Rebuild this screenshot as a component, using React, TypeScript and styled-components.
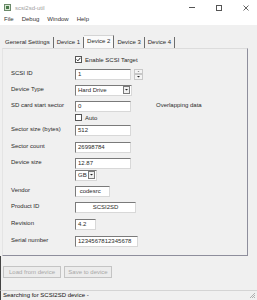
import React from "react";
import styled, { createGlobalStyle } from "styled-components";

const GlobalStyle = createGlobalStyle`
  html, body {
    margin: 0;
    padding: 0;
    background: #f0f0f0;
  }
  body {
    font-family: "Liberation Sans", "DejaVu Sans", sans-serif;
    font-size: 6px;
    color: #2a2a2a;
  }
`;

/*
  Window frame
*/

const Window = styled.div`
  width: 257px;
  height: 300px;
  display: flex;
  flex-direction: column;
  background: #f0f0f0;
  overflow: hidden;
`;

const TitleBar = styled.div`
  height: 15px;
  background: #ffffff;
  display: flex;
  align-items: center;
  padding-left: 4px;
  gap: 4px;
`;

const TitleText = styled.span`
  color: #a0a0a0;
  flex: 1;
`;

const WinButton = styled.div`
  width: 23px;
  height: 15px;
  display: flex;
  align-items: center;
  justify-content: center;
`;

const MenuBar = styled.div`
  height: 10px;
  background: #ffffff;
  display: flex;
  align-items: center;
  padding-left: 4px;
  gap: 8px;
  padding-bottom: 1px;
`;

const MenuItem = styled.span`
  color: #333;
`;

const Body = styled.div`
  flex: 1;
  display: flex;
  flex-direction: column;
  padding: 10px 9px 0 2px;
`;

/*
  Tabs
*/

const TabRow = styled.div`
  display: flex;
  align-items: flex-end;
  height: 13px;
`;

const Tab = styled.div<{ $active?: boolean }>`
  height: ${(p) => (p.$active ? "13px" : "11px")};
  line-height: 11px;
  padding: 0 3px;
  border-right: 1px solid #6d6d6d;
  background: ${(p) => (p.$active ? "#fafafa" : "transparent")};
  border-top: ${(p) => (p.$active ? "1px solid #d4d4d4" : "none")};
  box-sizing: border-box;
  white-space: nowrap;
`;

const Panel = styled.div`
  border-right: 1px solid #8e8e9c;
  border-bottom: 1px solid #8e8e9c;
  border-top: 1px solid #dcdcdc;
  border-left: 1px solid #e4e4e4;
  padding: 7px 0 8px 8px;
  display: flex;
  flex-direction: column;
`;

const Row = styled.div<{ $h: number }>`
  height: ${(p) => p.$h}px;
  display: flex;
  align-items: flex-start;
`;

const Label = styled.div`
  width: 64px;
  line-height: 8px;
  white-space: nowrap;
`;

const Field = styled.div<{ $w: number; $center?: boolean }>`
  width: ${(p) => p.$w}px;
  height: 11px;
  box-sizing: border-box;
  background: #ffffff;
  border: 1px solid #7a7a7a;
  border-right-color: #d8d8d8;
  border-bottom-color: #d8d8d8;
  line-height: 9px;
  padding-left: ${(p) => (p.$center ? "0" : "2px")};
  text-align: ${(p) => (p.$center ? "center" : "left")};
  white-space: nowrap;
  overflow: hidden;
`;

const Select = styled.div<{ $w: number }>`
  width: ${(p) => p.$w}px;
  height: 11px;
  box-sizing: border-box;
  background: #ffffff;
  border: 1px solid #7a7a7a;
  border-right-color: #d8d8d8;
  border-bottom-color: #d8d8d8;
  display: flex;
  align-items: center;
  padding-left: 2px;
  line-height: 9px;
`;

const SelectText = styled.span`
  flex: 1;
`;

const ArrowBox = styled.div`
  width: 5px;
  height: 6px;
  margin-right: 1px;
  border: 1px solid #7a7a7a;
  background: #f0f0f0;
  display: flex;
  align-items: center;
  justify-content: center;
`;

const Spinner = styled.div`
  margin-left: 3px;
  width: 9px;
  height: 11px;
  display: flex;
  flex-direction: column;
`;

const SpinBtn = styled.div`
  flex: 1;
  box-sizing: border-box;
  border: 1px solid #c8c8c8;
  background: #f4f4f4;
  display: flex;
  align-items: center;
  justify-content: center;
`;

const CheckRow = styled.div`
  display: flex;
  align-items: center;
  gap: 3px;
  line-height: 8px;
`;

const Box = styled.div`
  width: 5px;
  height: 5px;
  border: 1px solid #555;
  background: #fff;
  display: flex;
  align-items: center;
  justify-content: center;
`;

const Note = styled.span`
  margin-left: 25px;
  line-height: 8px;
`;

const Indent = styled.div`
  margin-left: 64px;
`;

/*
  Bottom area
*/

const ButtonRow = styled.div`
  display: flex;
  gap: 3px;
  padding: 10px 0 0 2px;
  height: 34px;
  box-sizing: border-box;
  margin-left: -2px;
  border-left: 1px solid #444;
`;

const Button = styled.div<{ $w: number }>`
  width: ${(p) => p.$w}px;
  height: 12px;
  box-sizing: border-box;
  border: 1px solid #c4c4c4;
  background: #ececec;
  color: #a8a8a8;
  display: flex;
  align-items: center;
  justify-content: center;
  white-space: nowrap;
`;

const StatusBar = styled.div`
  height: 11px;
  border-top: 1px solid #d4d4d4;
  border-left: 1px solid #444;
  display: flex;
  align-items: center;
  padding-left: 2px;
  position: relative;
  color: #111;
`;

const Grip = styled.svg`
  position: absolute;
  right: 1px;
  bottom: 1px;
`;

function Check() {
  return (
    <svg width="5" height="5" viewBox="0 0 6 6">
      <path d="M0.8 3 L2.3 4.6 L5.3 1" stroke="#222" strokeWidth="1.2" fill="none" />
    </svg>
  );
}

function Down({ size = 3 }: { size?: number }) {
  return (
    <svg width={size} height={size / 2} viewBox="0 0 4 2">
      <path d="M0 0 L4 0 L2 2 Z" fill="#222" />
    </svg>
  );
}

function Up() {
  return (
    <svg width="3" height="1.5" viewBox="0 0 4 2">
      <path d="M0 2 L4 2 L2 0 Z" fill="#777" />
    </svg>
  );
}

function App() {
  return (
    <Window>
      <GlobalStyle />
      <TitleBar>
        <svg width="7" height="7" viewBox="0 0 7 7">
          <rect x="0.5" y="0.5" width="6" height="6" fill="#d9e7d5" stroke="#6c8a6a" />
          <rect x="2" y="2" width="3" height="3" fill="#4a7a4a" />
        </svg>
        <TitleText>scsi2sd-util</TitleText>
        <WinButton>
          <svg width="6" height="1">
            <rect width="6" height="1" fill="#555" />
          </svg>
        </WinButton>
        <WinButton>
          <svg width="6" height="6">
            <rect x="0.5" y="0.5" width="5" height="5" fill="none" stroke="#555" />
          </svg>
        </WinButton>
        <WinButton>
          <svg width="6" height="6">
            <path d="M0.5 0.5 L5.5 5.5 M5.5 0.5 L0.5 5.5" stroke="#555" strokeWidth="0.9" />
          </svg>
        </WinButton>
      </TitleBar>
      <MenuBar>
        <MenuItem>File</MenuItem>
        <MenuItem>Debug</MenuItem>
        <MenuItem>Window</MenuItem>
        <MenuItem>Help</MenuItem>
      </MenuBar>
      <Body>
        <TabRow>
          <Tab>General Settings</Tab>
          <Tab>Device 1</Tab>
          <Tab $active>Device 2</Tab>
          <Tab>Device 3</Tab>
          <Tab>Device 4</Tab>
        </TabRow>
        <Panel>
          <Row $h={13}>
            <Indent>
              <CheckRow>
                <Box>
                  <Check />
                </Box>
                Enable SCSI Target
              </CheckRow>
            </Indent>
          </Row>
          <Row $h={16}>
            <Label>SCSI ID</Label>
            <Field $w={56}>1</Field>
            <Spinner>
              <SpinBtn>
                <Up />
              </SpinBtn>
              <SpinBtn>
                <Down />
              </SpinBtn>
            </Spinner>
          </Row>
          <Row $h={16}>
            <Label>Device Type</Label>
            <Select $w={57}>
              <SelectText>Hard Drive</SelectText>
              <ArrowBox>
                <Down />
              </ArrowBox>
            </Select>
          </Row>
          <Row $h={13}>
            <Label>SD card start sector</Label>
            <Field $w={56}>0</Field>
            <Note>Overlapping data</Note>
          </Row>
          <Row $h={11}>
            <Indent>
              <CheckRow>
                <Box />
                Auto
              </CheckRow>
            </Indent>
          </Row>
          <Row $h={17}>
            <Label>Sector size (bytes)</Label>
            <Field $w={56}>512</Field>
          </Row>
          <Row $h={16}>
            <Label>Sector count</Label>
            <Field $w={56}>26998784</Field>
          </Row>
          <Row $h={12}>
            <Label>Device size</Label>
            <Field $w={56}>12.87</Field>
          </Row>
          <Row $h={16}>
            <Indent>
              <Select $w={22}>
                <SelectText>GB</SelectText>
                <ArrowBox>
                  <Down />
                </ArrowBox>
              </Select>
            </Indent>
          </Row>
          <Row $h={16}>
            <Label>Vendor</Label>
            <Field $w={35}>&nbsp;codesrc</Field>
          </Row>
          <Row $h={17}>
            <Label>Product ID</Label>
            <Field $w={61} $center>
              SCSI2SD
            </Field>
          </Row>
          <Row $h={17}>
            <Label>Revision</Label>
            <Field $w={21}>4.2</Field>
          </Row>
          <Row $h={11}>
            <Label>Serial number</Label>
            <Field $w={63}>1234567812345678</Field>
          </Row>
        </Panel>
        <ButtonRow>
          <Button $w={58}>Load from device</Button>
          <Button $w={48}>Save to device</Button>
        </ButtonRow>
      </Body>
      <StatusBar>
        Searching for SCSI2SD device -
        <Grip width="7" height="7" viewBox="0 0 7 7">
          <path d="M6 1 L1 6 M6 3 L3 6 M6 5 L5 6" stroke="#a0a0a0" strokeWidth="0.8" />
        </Grip>
      </StatusBar>
    </Window>
  );
}

export default App;
